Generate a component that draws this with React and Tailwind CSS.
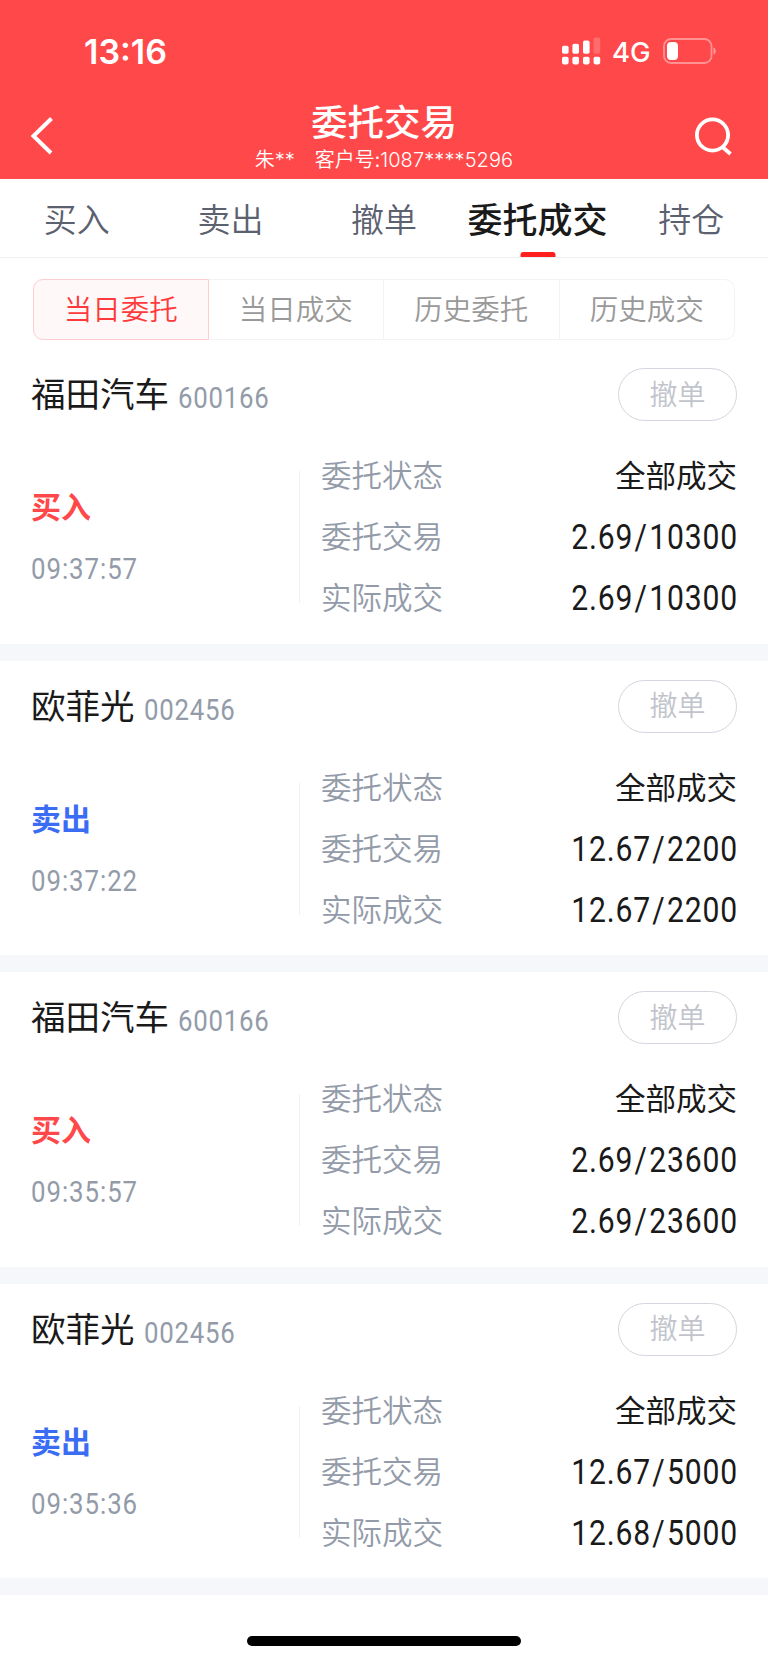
import React, { useState } from "react";

const tabs = ["买入", "卖出", "撤单", "委托成交", "持仓"];
const ranges = ["当日委托", "当日成交", "历史委托", "历史成交"];

const orders = [
  { id: 1, name: "福田汽车", code: "600166", side: "buy", time: "09:37:57", status: "全部成交", entrust: "2.69/10300", actual: "2.69/10300" },
  { id: 2, name: "欧菲光", code: "002456", side: "sell", time: "09:37:22", status: "全部成交", entrust: "12.67/2200", actual: "12.67/2200" },
  { id: 3, name: "福田汽车", code: "600166", side: "buy", time: "09:35:57", status: "全部成交", entrust: "2.69/23600", actual: "2.69/23600" },
  { id: 4, name: "欧菲光", code: "002456", side: "sell", time: "09:35:36", status: "全部成交", entrust: "12.67/5000", actual: "12.68/5000" },
];

function StatusBar() {
  return (
    <div className="flex h-[102px] justify-between pl-[84px] pr-[52px] font-['Inter'] text-white">
      <span className="mt-[32px] h-10 text-[34px] font-semibold leading-10">13:16</span>
      <div className="mt-[31px] flex h-10 items-center">
        <svg className="relative left-px" width="39" height="28" viewBox="0 0 39 28" fill="white">
          <rect x="0" y="8.8" width="6.6" height="8" rx="1.8" />
          <rect x="10.4" y="6.8" width="6.6" height="10" rx="1.8" />
          <rect x="21" y="3.6" width="6.6" height="13.2" rx="1.8" />
          <rect x="31.6" y="0.4" width="6.6" height="16.4" rx="1.8" opacity="0.2" />
          <rect x="0" y="19.8" width="6.6" height="7.6" rx="1.8" />
          <rect x="10.4" y="19.8" width="6.6" height="7.6" rx="1.8" />
          <rect x="21" y="19.8" width="6.6" height="7.6" rx="1.8" />
          <rect x="31.6" y="19.8" width="6.6" height="7.6" rx="1.8" />
        </svg>
        <span className="ml-3 mt-[3px] w-[37px] whitespace-nowrap text-[27.5px] font-medium">4G</span>
        <svg className="-mr-[2px] ml-[14px]" width="55" height="26" viewBox="0 0 55 26">
          <rect x="1" y="1" width="47.5" height="24" rx="7" fill="none" stroke="white" strokeOpacity="0.4" strokeWidth="1.8" />
          <rect x="4" y="4" width="11" height="18" rx="4" fill="white" />
          <path d="M50.5 9.5c3 1.2 3 6 0 7.2z" fill="white" fillOpacity="0.45" />
        </svg>
      </div>
    </div>
  );
}

function Header() {
  return (
    <header className="h-[179px] bg-[#ff484a]">
      <StatusBar />
      <div className="grid h-[77px] grid-cols-[1fr_auto_1fr] pl-[30px] pr-[36px] text-white">
        <svg className="mt-[14px]" width="25" height="40" viewBox="0 0 25 40" fill="none" stroke="white" strokeWidth="4">
          <path d="M21.5 2.5L3.5 20l17.5 17" />
        </svg>
        <div className="relative left-[3px] text-center">
          <h1 className="h-[38px] text-[36.5px] font-medium leading-[38px]">委托交易</h1>
          <p className="flex h-[34px] justify-center gap-5 whitespace-nowrap text-[20px] font-[350] leading-[37px]">
            <span>
              朱<span className="font-['Inter'] font-light">**</span>
            </span>
            <span>
              客户号:<span className="font-['Inter'] font-light tracking-[0.1px]">1087****5296</span>
            </span>
          </p>
        </div>
        <svg className="ml-auto mt-[14px]" width="38" height="40" viewBox="0 0 38 40" fill="none" stroke="white" strokeWidth="3.8">
          <circle cx="18.5" cy="19" r="15.6" />
          <path d="M28.5 31l8 7" />
        </svg>
      </div>
    </header>
  );
}

function OrderCard({ order }) {
  const buy = order.side === "buy";
  const rows = [
    ["委托交易", order.entrust],
    ["实际成交", order.actual],
  ];

  return (
    <article className="flex h-[311.5px] flex-col border-b-[17px] border-[#f6f7fa] pl-[31px] pr-[31px]">
      <div className="flex h-[96px] shrink-0 justify-between pt-[19px]">
        <div className="flex h-[53px] leading-[49px]">
          <h2 className="text-[34.5px]">{order.name}</h2>
          <span className="ml-[9px] origin-left scale-x-86 font-['Roboto'] text-[30px] leading-[59px] tracking-[0.9px] text-[#939ba9]">
            {order.code}
          </span>
        </div>
        <button className="h-[53px] w-[119px] rounded-full border border-[#d4d5df] pb-[3px] text-[28px] font-[350] leading-[45px] text-[#c2c4cc]">
          撤单
        </button>
      </div>
      <div className="flex h-[183px] shrink-0">
        <div className="w-[268px] pt-[32px] leading-[61px]">
          <p className={buy ? "h-[61px] text-[30px] font-bold leading-[57px] text-[#ff484a]" : "h-[61px] text-[30px] font-bold leading-[57px] text-[#3a6cf4]"}>
            {buy ? "买入" : "卖出"}
          </p>
          <p className="w-fit origin-left scale-x-86 font-['Roboto'] text-[30px] tracking-[1.1px] text-[#939ba9]">{order.time}</p>
        </div>
        <div className="mt-[26px] h-[132px] w-px bg-[#eef0f3]" />
        <div className="ml-[21px] flex-1 text-[30.5px] leading-[58px]">
          <div className="flex h-[61px] justify-between">
            <span className="font-[350] text-[#939ba9]">委托状态</span>
            <span>{order.status}</span>
          </div>
          {rows.map(([label, value]) => {
            const [price, amount] = value.split("/");
            return (
              <div key={label} className="flex h-[61px] justify-between">
                <span className="font-[350] text-[#939ba9]">{label}</span>
                <span className="-mr-px origin-right scale-x-86 font-['Roboto'] text-[35px] leading-[63px] tracking-[1px]">
                  {price}
                  <span className="mx-[1.5px]">/</span>
                  {amount}
                </span>
              </div>
            );
          })}
        </div>
      </div>
    </article>
  );
}

export default function App() {
  const [tab, setTab] = useState("委托成交");
  const [range, setRange] = useState("当日委托");

  return (
    <div className="h-[1663px] w-[768px] overflow-hidden bg-white font-['Noto_Sans_CJK_SC',sans-serif] text-[#1a1a1a]">
      <Header />

      <nav className="grid h-[79px] grid-cols-5 border-b border-[#eff0f2]">
        {tabs.map((t) => (
          <button
            key={t}
            onClick={() => setTab(t)}
            className={
              t === tab
                ? "relative whitespace-nowrap text-[35px] font-medium leading-[76px]"
                : "text-[33px] font-[350] leading-[76px] text-[#5c6170]"
            }
          >
            {t}
            {t === tab && <i className="absolute bottom-0 left-1/2 h-[5px] w-[35px] -translate-x-1/2 rounded-t-[3px] bg-[#ff1f1f]" />}
          </button>
        ))}
      </nav>

      <div className="mx-[33px] mb-[9px] mt-[21px] grid h-[61px] grid-cols-4 text-[28.5px] font-[350]">
        {ranges.map((r) => (
          <button
            key={r}
            onClick={() => setRange(r)}
            className={
              r === range
                ? "rounded-l-[10px] border border-[#fdcdd0] bg-[#fff8f8] pb-1 leading-[54px] text-[#ff3a3c]"
                : "border border-l-0 border-[#f1f3f6] pb-1 leading-[54px] text-[#999] last:rounded-r-[10px]"
            }
          >
            {r}
          </button>
        ))}
      </div>

      <main>
        {orders.map((o) => (
          <OrderCard key={o.id} order={o} />
        ))}
      </main>

      <div className="mx-auto mt-[40.5px] h-[10px] w-[274px] rounded-full bg-black" />
    </div>
  );
}
